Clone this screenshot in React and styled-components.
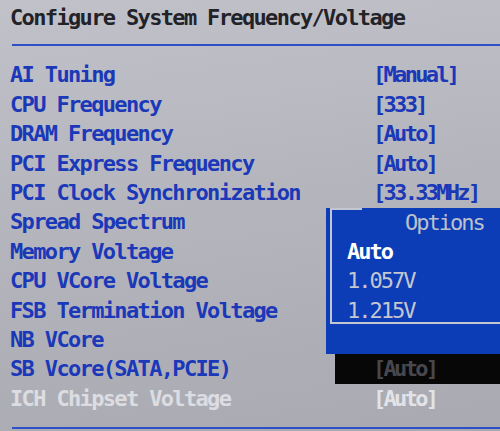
import React from "react";
import styled, { createGlobalStyle } from "styled-components";

const ROW = 29.4;

const Global = createGlobalStyle`
  html, body { margin: 0; padding: 0; }
  body {
    width: 500px;
    height: 431px;
    overflow: hidden;
    background: #b4b5bc;
  }
`;

const Screen = styled.div`
  position: relative;
  width: 500px;
  height: 431px;
  overflow: hidden;
  box-sizing: border-box;
  padding-left: 10px;
  background: linear-gradient(172deg, #c1c2c9 0%, #b5b6bd 45%, #a9aab1 100%);
  font-family: "DejaVu Sans Mono", "Liberation Mono", monospace;
  font-size: 22px;
  letter-spacing: -1.65px;
`;

const Title = styled.div`
  padding-top: 3px;
  height: ${ROW}px;
  line-height: ${ROW}px;
  color: #222229;
  font-weight: bold;
  white-space: nowrap;
`;

const Rule = styled.div`
  height: 2px;
  margin: ${(p) => p.$top}px 0 ${(p) => p.$bottom}px 2px;
  background: #2f4fc4;
`;

const List = styled.div`
  display: flex;
  flex-direction: column;
`;

const Row = styled.div`
  display: grid;
  grid-template-columns: 363px 1fr;
  height: ${ROW}px;
  line-height: ${ROW}px;
  font-weight: bold;
  white-space: nowrap;
`;

const Label = styled.div`
  color: ${(p) => (p.$active ? "#dcdde2" : "#1a38b8")};
`;

const Value = styled.div`
  color: ${(p) => (p.$shadow ? "#47474e" : p.$active ? "#e2e3e8" : "#1a38b8")};
  letter-spacing: -2.7px;
  margin-left: ${(p) => (p.$shadow ? -38 : 0)}px;
  padding-left: ${(p) => (p.$shadow ? 38 : 0)}px;
  background: ${(p) => (p.$shadow ? "#070708" : "transparent")};
`;

const Popup = styled.div`
  position: absolute;
  left: 326px;
  top: 207.6px;
  width: 190px;
  height: 146px;
  box-sizing: border-box;
  padding: 14.7px 0 0 4px;
  background: #0c3cb6;
`;

const Frame = styled.div`
  position: relative;
  height: 116px;
  box-sizing: border-box;
  border-left: 2px solid #c3c6d0;
  border-bottom: 2px solid #c3c6d0;
  &::before {
    content: "";
    position: absolute;
    left: 0;
    top: 0;
    width: 30px;
    height: 2px;
    background: #c3c6d0;
  }
`;

const Header = styled.div`
  margin-top: -14.7px;
  height: ${ROW}px;
  line-height: ${ROW}px;
  padding-left: 73px;
  color: #bcc0cc;
  letter-spacing: -2px;
`;

const Option = styled.div`
  height: ${ROW}px;
  line-height: ${ROW}px;
  padding-left: 15px;
  color: ${(p) => (p.$selected ? "#ffffff" : "#c4c7d0")};
  font-weight: ${(p) => (p.$selected ? "bold" : "normal")};
  letter-spacing: -2px;
`;

const rows = [
  ["AI Tuning", "[Manual]"],
  ["CPU Frequency", "[333]"],
  ["DRAM Frequency", "[Auto]"],
  ["PCI Express Frequency", "[Auto]"],
  ["PCI Clock Synchronization", "[33.33MHz]"],
  ["Spread Spectrum", ""],
  ["Memory Voltage", ""],
  ["CPU VCore Voltage", ""],
  ["FSB Termination Voltage", ""],
  ["NB VCore", ""],
  ["SB Vcore(SATA,PCIE)", "[Auto]", "shadow"],
  ["ICH Chipset Voltage", "[Auto]", "active"],
];

export default function App() {
  return (
    <>
      <Global />
      <Screen>
        <Title>Configure System Frequency/Voltage</Title>
        <Rule $top={12} $bottom={14} />
        <List>
          {rows.map(([label, value, state]) => (
            <Row key={label}>
              <Label $active={state === "active"}>{label}</Label>
              <Value $active={state === "active"} $shadow={state === "shadow"}>
                {value}
              </Value>
            </Row>
          ))}
        </List>
        <Rule $top={14} $bottom={0} />
        <Popup>
          <Frame>
            <Header>Options</Header>
            <Option $selected>Auto</Option>
            <Option>1.057V</Option>
            <Option>1.215V</Option>
          </Frame>
        </Popup>
      </Screen>
    </>
  );
}
